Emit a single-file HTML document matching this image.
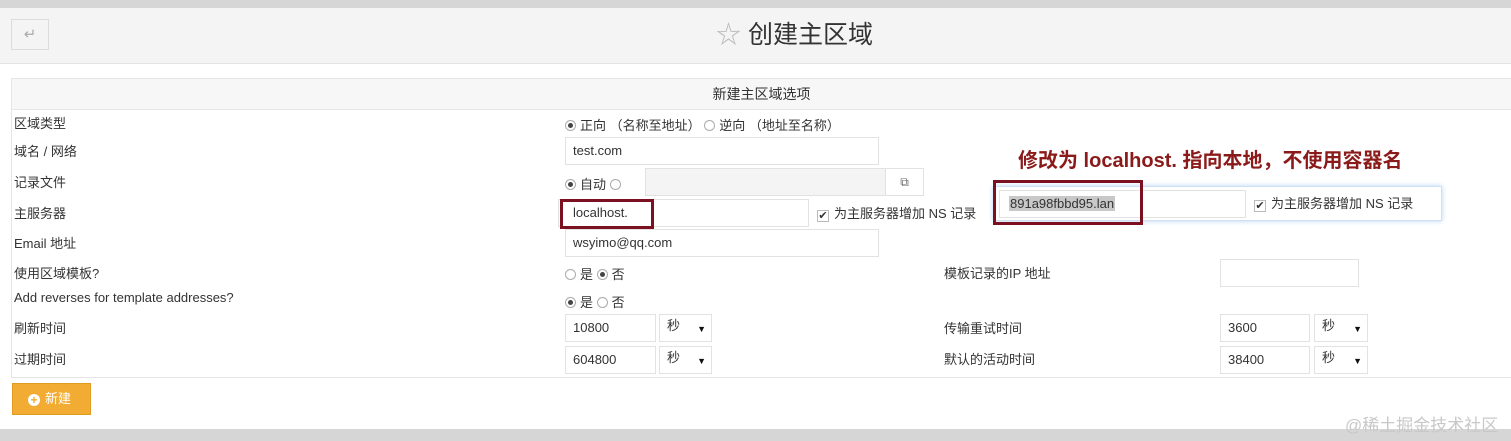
<!DOCTYPE html>
<html><head><meta charset="utf-8"><style>
*{box-sizing:border-box;margin:0;padding:0}
body{width:1511px;height:441px;background:#fff;font-family:"Liberation Sans","Noto Sans CJK SC",sans-serif;font-size:13px;color:#333;position:relative;overflow:hidden}
.a{position:absolute}
.inp{position:absolute;border:1px solid #e2e2e2;background:#fff;height:28px;padding-left:7px;line-height:26px;font-size:13px;color:#333}
.sel{position:absolute;border:1px solid #e2e2e2;background:#fff;height:28px;padding-left:7px;line-height:22px;font-size:13px}
.sel:after{content:"▼";position:absolute;right:5px;top:3px;font-size:9px;color:#111}
.lbl{position:absolute;left:14px;font-size:13px;white-space:nowrap}
.r{display:inline-block;width:11px;height:11px;border:1px solid #aaa;border-radius:50%;vertical-align:-1px;margin-right:4px;position:relative;background:#fff}
.r.on:after{content:"";position:absolute;left:2px;top:2px;width:5px;height:5px;border-radius:50%;background:#444}
.cb{display:inline-block;width:12px;height:12px;border:1px solid #bbb;vertical-align:-1px;margin-right:5px;font-size:11px;line-height:10px;text-align:center;color:#333}
.t{position:absolute;white-space:nowrap}
</style></head><body>
<div class="a" style="left:0;top:0;width:1511px;height:8px;background:#d6d6d6"></div>
<div class="a" style="left:0;top:8px;width:1511px;height:56px;background:#f4f4f4;border-bottom:1px solid #e3e3e3"></div>
<div class="a" style="left:11px;top:19px;width:38px;height:31px;border:1px solid #ddd;color:#aaa;font-size:15px;text-align:center;line-height:29px">↵</div>
<div class="t" style="left:716px;top:18px;font-size:25px;color:#333;line-height:34px"><span style="color:#bbb">☆</span> 创建主区域</div>
<div class="a" style="left:11px;top:78px;width:1500px;height:300px;border:1px solid #e6e6e6;border-right:none"></div>
<div class="a" style="left:12px;top:79px;width:1499px;height:31px;background:#f7f7f7;border-bottom:1px solid #e6e6e6;text-align:center;line-height:30px;font-size:14px">新建主区域选项</div>
<div class="lbl" style="top:113px">区域类型</div>
<div class="t" style="left:565px;top:115px"><span class="r on"></span>正向 （名称至地址） <span class="r"></span>逆向 （地址至名称）</div>
<div class="lbl" style="top:141px">域名 / 网络</div>
<div class="inp" style="left:565px;top:137px;width:314px">test.com</div>
<div class="lbl" style="top:172px">记录文件</div>
<div class="t" style="left:565px;top:174px"><span class="r on"></span>自动 <span class="r"></span></div>
<div class="a" style="left:645px;top:168px;width:241px;height:28px;background:#f4f4f4;border:1px solid #e2e2e2"></div>
<div class="a" style="left:885px;top:168px;width:39px;height:28px;border:1px solid #e2e2e2;background:#fff;text-align:center;line-height:26px;font-size:12px;color:#666">⧉</div>
<div class="lbl" style="top:203px">主服务器</div>
<div class="inp" style="left:558px;top:199px;width:251px;padding-left:14px">localhost.</div>
<div class="a" style="left:560px;top:199px;width:94px;height:30px;border:3px solid #7b1020"></div>
<div class="t" style="left:817px;top:203px"><span class="cb">✔</span>为主服务器增加 NS 记录</div>
<div class="lbl" style="top:233px">Email 地址</div>
<div class="inp" style="left:565px;top:229px;width:314px">wsyimo@qq.com</div>
<div class="t" style="left:1018px;top:144px;font-size:20px;font-weight:bold;color:#8b1a1a">修改为 localhost. 指向本地，不使用容器名</div>
<div class="a" style="left:993px;top:186px;width:449px;height:35px;background:#fff;border:1px solid #cfe0f5;box-shadow:0 0 5px #b8d2f2"></div>
<div class="inp" style="left:999px;top:190px;width:247px;line-height:26px;padding-left:9px"><span style="background:#c8c8c8;padding:0 1px">891a98fbbd95.lan</span></div>
<div class="a" style="left:993px;top:180px;width:150px;height:45px;border:3px solid #7b1020"></div>
<div class="t" style="left:1254px;top:193px"><span class="cb">✔</span>为主服务器增加 NS 记录</div>
<div class="lbl" style="top:263px">使用区域模板?</div>
<div class="t" style="left:565px;top:264px"><span class="r"></span>是 <span class="r on"></span>否</div>
<div class="t" style="left:944px;top:263px">模板记录的IP 地址</div>
<div class="inp" style="left:1220px;top:259px;width:139px"></div>
<div class="lbl" style="top:290px">Add reverses for template addresses?</div>
<div class="t" style="left:565px;top:292px"><span class="r on"></span>是 <span class="r"></span>否</div>
<div class="lbl" style="top:318px">刷新时间</div>
<div class="inp" style="left:565px;top:314px;width:91px">10800</div>
<div class="sel" style="left:659px;top:314px;width:53px">秒</div>
<div class="lbl" style="top:349px">过期时间</div>
<div class="inp" style="left:565px;top:346px;width:91px">604800</div>
<div class="sel" style="left:659px;top:346px;width:53px">秒</div>
<div class="t" style="left:944px;top:318px">传输重试时间</div>
<div class="inp" style="left:1220px;top:314px;width:90px">3600</div>
<div class="sel" style="left:1314px;top:314px;width:54px">秒</div>
<div class="t" style="left:944px;top:349px">默认的活动时间</div>
<div class="inp" style="left:1220px;top:346px;width:90px">38400</div>
<div class="sel" style="left:1314px;top:346px;width:54px">秒</div>
<div class="a" style="left:12px;top:383px;width:79px;height:32px;background:#f2ac33;border:1px solid #e09c22;color:#fff;font-size:13px;line-height:30px;padding-left:15px"><span style="display:inline-block;width:12px;height:12px;border-radius:50%;background:#fff;color:#f2ac33;font-size:12px;line-height:12px;text-align:center;font-weight:bold;vertical-align:-1px;margin-right:5px">+</span>新建</div>
<div class="a" style="left:0;top:429px;width:1511px;height:12px;background:#d6d6d6"></div>
<div class="t" style="left:1345px;top:411px;font-size:17px;color:#c8c8c8">@稀土掘金技术社区</div>
</body></html>
